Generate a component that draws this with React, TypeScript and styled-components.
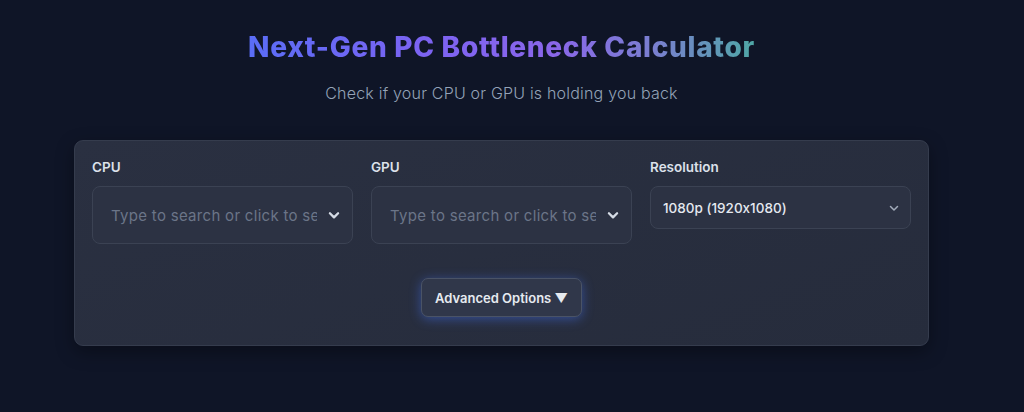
import React from 'react';
import styled, { createGlobalStyle } from 'styled-components';

const GlobalStyle = createGlobalStyle`
  html, body {
    margin: 0;
    padding: 0;
    background: #0f1527;
    font-family: Inter, "Noto Sans", sans-serif;
    font-feature-settings: "calt" 0;
  }
`;

const Page = styled.main`
  width: 1024px;
  height: 412px;
  box-sizing: border-box;
  padding: 31px 95px 0 74px;
  display: flex;
  flex-direction: column;
  align-items: center;
`;

const Title = styled.h1`
  margin: 0;
  font-size: 28px;
  line-height: 32px;
  font-weight: 800;
  letter-spacing: 0.7px;
  background: linear-gradient(90deg, #5a6df6 0%, #7c63f2 35%, #8a66ea 60%, #7a7fd0 80%, #4fa7a6 100%);
  -webkit-background-clip: text;
  background-clip: text;
  color: transparent;
`;

const Subtitle = styled.p`
  margin: 19px 0 0;
  font-size: 16px;
  line-height: 22px;
  font-weight: 300;
  letter-spacing: 0.2px;
  color: #94a3b8;
`;

const Card = styled.section`
  align-self: stretch;
  margin-top: 36px;
  height: 206px;
  box-sizing: border-box;
  padding: 17px 17px 0;
  border-radius: 9px;
  background: linear-gradient(160deg, #2a3041 0%, #262c3c 100%);
  border: 1px solid #353c4d;
  box-shadow: 0 6px 18px rgba(0, 0, 0, 0.35);
  display: flex;
  flex-direction: column;
  align-items: center;
`;

const Fields = styled.div`
  align-self: stretch;
  display: grid;
  grid-template-columns: repeat(3, minmax(0, 1fr));
  gap: 18px;
  align-items: start;
`;

const Field = styled.div`
  display: flex;
  flex-direction: column;
  gap: 10px;
`;

const Label = styled.label`
  font-size: 13.5px;
  font-weight: 600;
  color: #dce1ea;
  line-height: 18px;
`;

const Control = styled.div<{ $tall?: boolean }>`
  height: ${({ $tall }) => ($tall ? '58px' : '43px')};
  box-sizing: border-box;
  border: 1px solid #3b4253;
  border-radius: 8px;
  background: #2c3243;
  display: flex;
  align-items: center;
  padding: ${({ $tall }) => ($tall ? '0 11px 0 18px' : '0 10px 0 12px')};
  gap: 10px;
  overflow: hidden;
`;

const SearchInput = styled.input`
  flex: 1;
  min-width: 0;
  border: none;
  outline: none;
  background: transparent;
  padding: 0;
  font-family: inherit;
  font-size: 15px;
  letter-spacing: 0.3px;
  color: #e5e9f0;

  &::placeholder {
    color: #6b7588;
  }
`;

const Value = styled.span`
  flex: 1;
  white-space: nowrap;
  font-size: 13.5px;
  font-weight: 500;
  color: #e5e9f0;
`;

const Chevron = ({ bold }: { bold?: boolean }) => (
  <svg width={bold ? 14 : 12} height={bold ? 14 : 12} viewBox="0 0 24 24" fill="none"
    stroke={bold ? '#d5dbe5' : '#a3acbb'} strokeWidth={bold ? 4 : 3}
    strokeLinecap="round" strokeLinejoin="round">
    <polyline points="5 9 12 16 19 9" />
  </svg>
);

const AdvancedButton = styled.button`
  margin-top: 34px;
  height: 39px;
  padding: 0 13px;
  border-radius: 7px;
  border: 1px solid #4a5366;
  background: #30374a;
  color: #e6eaf0;
  font-family: inherit;
  font-size: 13px;
  font-weight: 600;
  box-shadow: 0 2px 12px rgba(70, 120, 255, 0.45);
  cursor: pointer;
`;

export default function App() {
  return (
    <>
      <GlobalStyle />
      <Page>
        <Title>Next-Gen PC Bottleneck Calculator</Title>
        <Subtitle>Check if your CPU or GPU is holding you back</Subtitle>
        <Card>
          <Fields>
            <Field>
              <Label>CPU</Label>
              <Control $tall>
                <SearchInput placeholder="Type to search or click to select" />
                <Chevron bold />
              </Control>
            </Field>
            <Field>
              <Label>GPU</Label>
              <Control $tall>
                <SearchInput placeholder="Type to search or click to select" />
                <Chevron bold />
              </Control>
            </Field>
            <Field>
              <Label>Resolution</Label>
              <Control>
                <Value>1080p (1920x1080)</Value>
                <Chevron />
              </Control>
            </Field>
          </Fields>
          <AdvancedButton>Advanced Options ▼</AdvancedButton>
        </Card>
      </Page>
    </>
  );
}
